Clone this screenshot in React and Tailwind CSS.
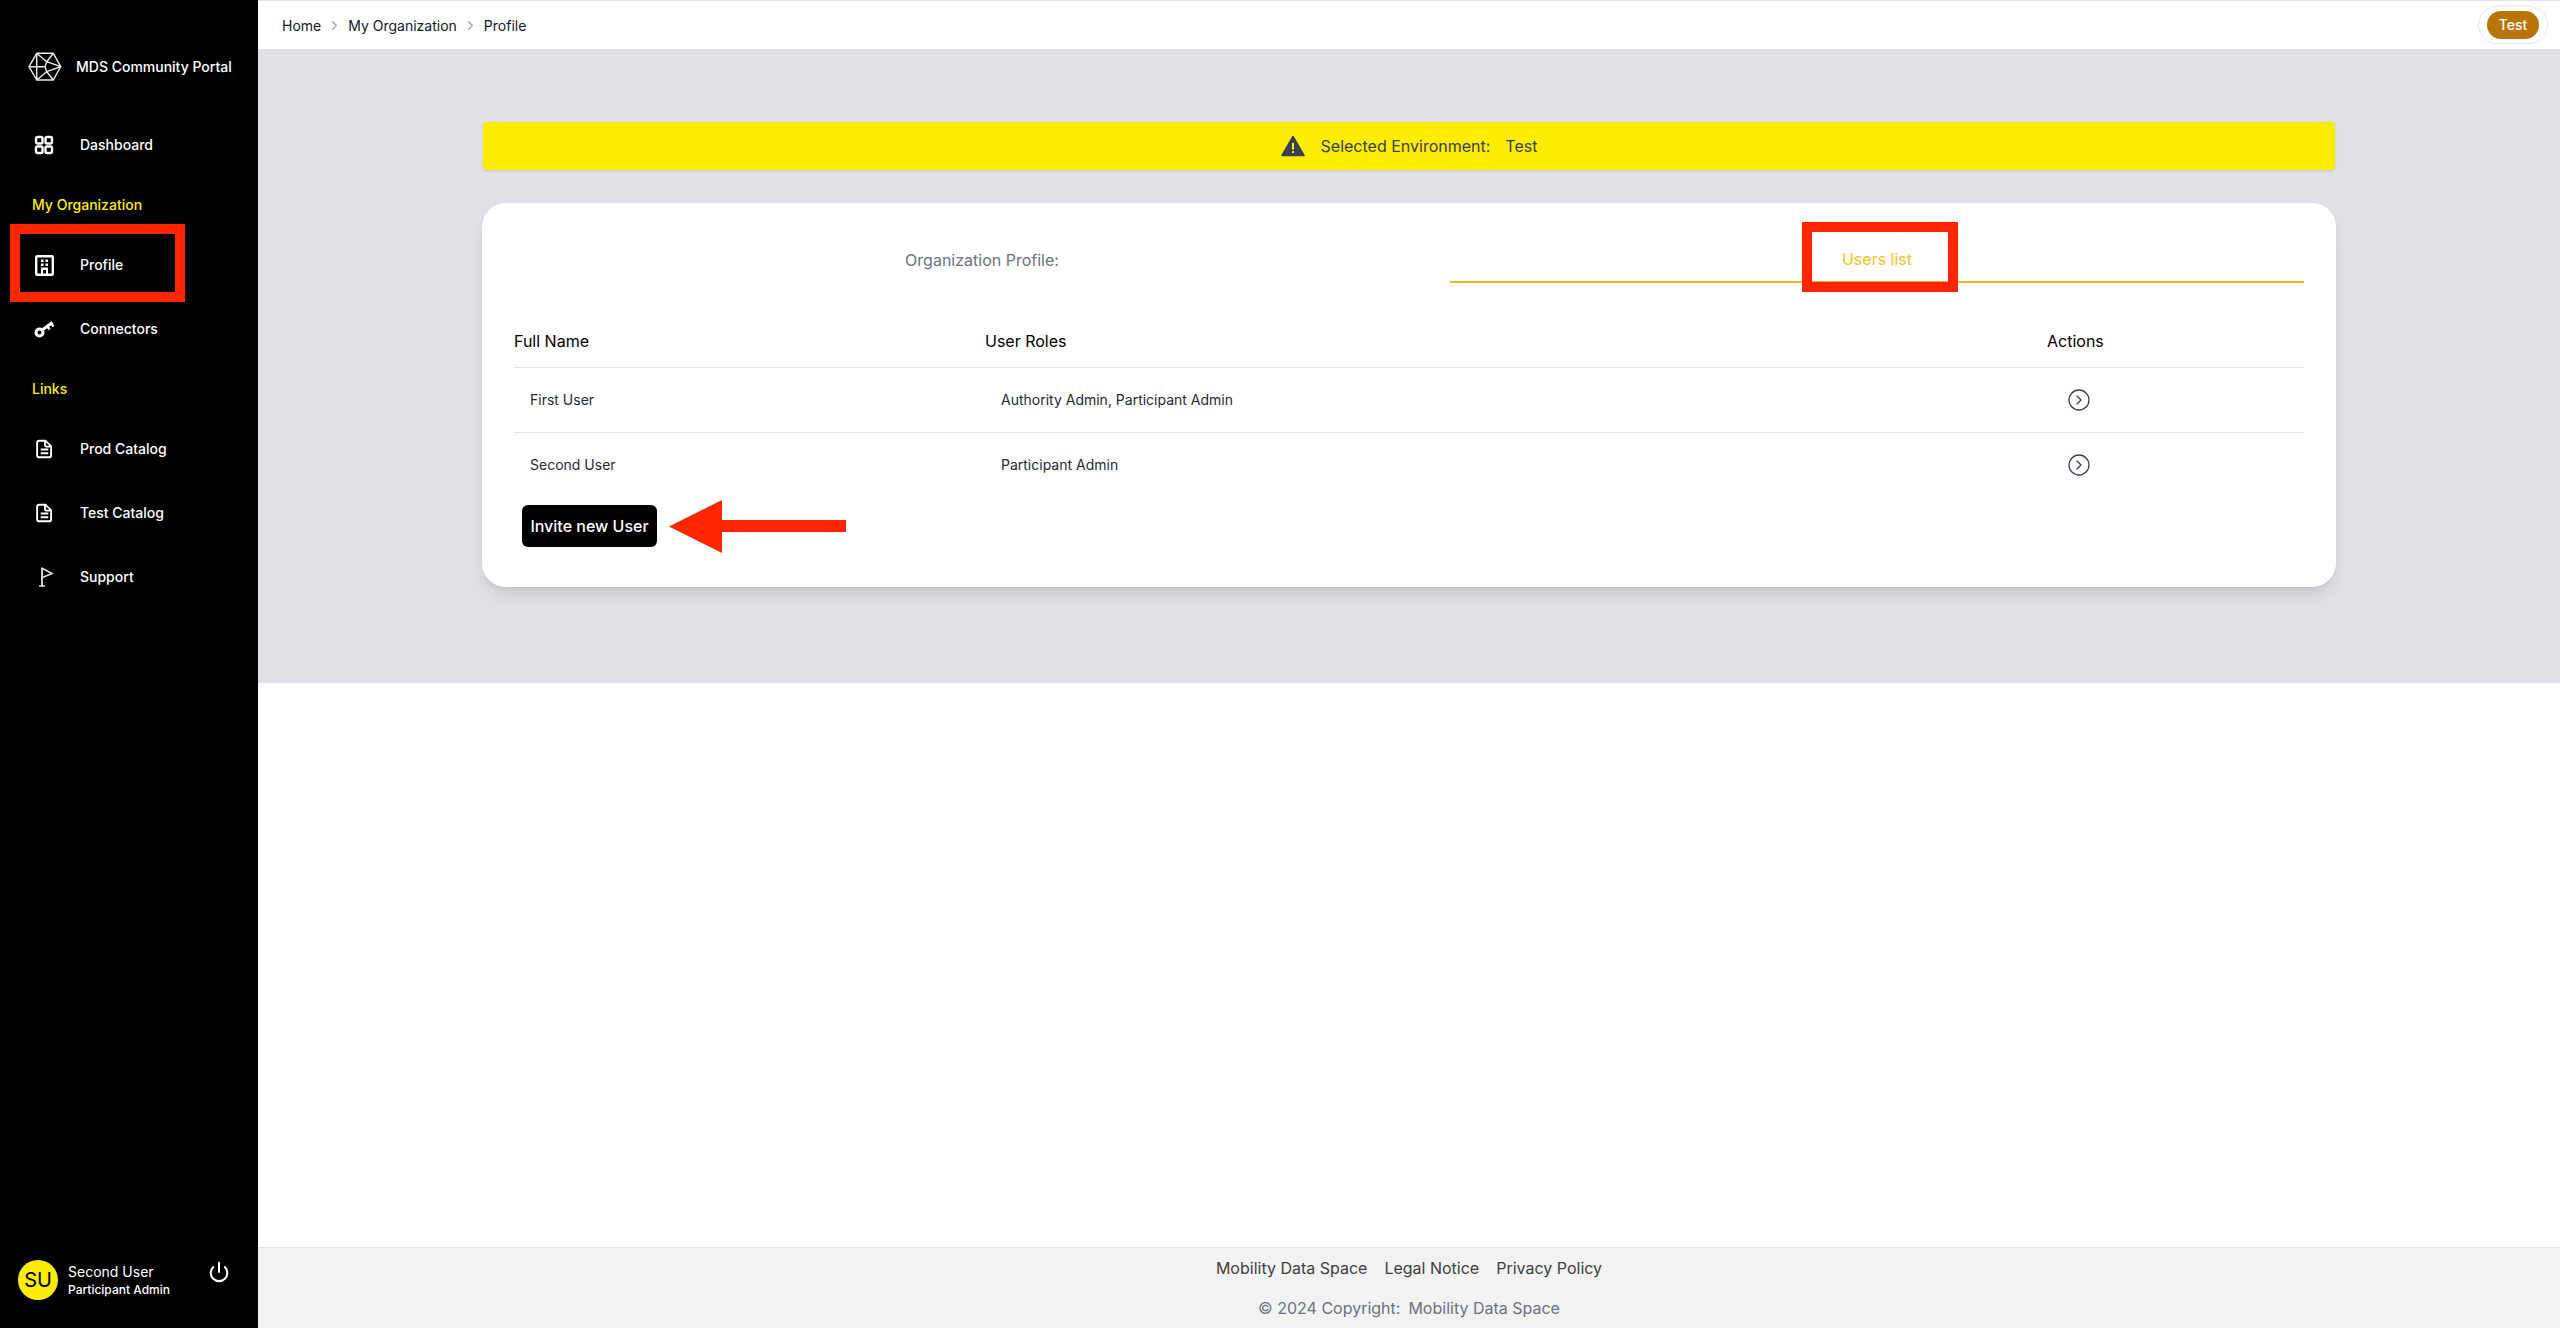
import { CircleChevronRight, ChevronRight, Power } from "lucide-react";

// sidebar icons
const DashboardIcon = () => (
  <svg width="20" height="20" viewBox="0 0 20 20" fill="none" stroke="white" strokeWidth="2.4">
    <rect x="2" y="2" width="6.5" height="6.5" rx="1.5" />
    <rect x="11.5" y="2" width="6.5" height="6.5" rx="1.5" />
    <rect x="2" y="11.5" width="6.5" height="6.5" rx="1.5" />
    <rect x="11.5" y="11.5" width="6.5" height="6.5" rx="1.5" />
  </svg>
);

const BuildingIcon = () => (
  <svg width="19" height="21" viewBox="0 0 19 21">
    <rect x="1.2" y="1.2" width="16.6" height="18.6" rx="1" fill="none" stroke="white" strokeWidth="2.4" />
    <path d="M6 4.5h2.5V7H6zM10.5 4.5H13V7h-2.5zM6 8.5h2.5V11H6zM10.5 8.5H13V11h-2.5zM6 12.5h7V19h-2v-4H8v4H6z" fill="white" />
  </svg>
);

const KeyIcon = () => (
  <svg width="20" height="20" viewBox="0 0 20 20" fill="none" stroke="white">
    <circle cx="5.5" cy="13.5" r="3.5" strokeWidth="3" />
    <path d="M8 11 18.5 3.5" strokeWidth="3" />
    <path d="M13.5 7.5 15.5 10.5M17 4.5 19.5 7.5" strokeWidth="2.4" />
  </svg>
);

const DocIcon = () => (
  <svg width="17" height="20" viewBox="0 0 18 20" fill="none" stroke="white" strokeWidth="2" strokeLinejoin="round">
    <path d="M3.5 1.2h6.5l6 6v9.3a2.3 2.3 0 0 1-2.3 2.3H3.5a2.3 2.3 0 0 1-2.3-2.3V3.5a2.3 2.3 0 0 1 2.3-2.3z" />
    <path d="M9.5 1.5v4a2 2 0 0 0 2 2h4M5 10.5h8M5 14.5h8" />
  </svg>
);

const FlagIcon = () => (
  <svg width="20" height="20" viewBox="0 0 20 20" fill="none" stroke="#e5e5e5">
    <path d="M8 0.5v18.5" strokeWidth="1.8" />
    <path d="M5 19h6" strokeWidth="1.5" />
    <path d="M8.5 1.5 18 6.5 8.5 10.5" strokeWidth="1.5" />
  </svg>
);

const Logo = () => (
  <svg width="34" height="31" viewBox="0 0 34 31" fill="none" stroke="#ececec" strokeWidth="1.4" strokeLinejoin="round">
    <path d="M1 14.7 8.7 1.3h16.6l7.4 13.4-7.4 13.3H8.7z" />
    <path d="M8.7 1.3V28M1 14.7h16M8.7 1.3l10 8.4 6.6-8.4M18.7 9.7l14 5-14 5 6.6 8.3M8.7 28l10-8.3M18.7 9.7 17 14.7l1.7 5" />
  </svg>
);

const NavItem = ({ icon, label }) => (
  <div className="flex h-16 items-center pl-[34px]">
    <span className="flex w-5 justify-center">{icon}</span>
    <span className="ml-[26px] text-sm font-medium text-white">{label}</span>
  </div>
);

const SectionLabel = ({ children }) => (
  <div className="flex h-[56px] items-center pl-8 text-sm font-medium text-[#ffed00]">{children}</div>
);

const Sidebar = () => (
  <aside className="relative flex w-[258px] shrink-0 flex-col bg-black">
    <div className="flex h-[113px] items-center pl-7 pt-[21px]">
      <Logo />
      <span className="ml-[14px] text-sm font-medium text-white">MDS Community Portal</span>
    </div>
    <NavItem icon={<DashboardIcon />} label="Dashboard" />
    <SectionLabel>My Organization</SectionLabel>
    <div className="relative">
      <NavItem icon={<BuildingIcon />} label="Profile" />
      <div className="absolute left-[10px] top-[-9px] h-[78px] w-[175px] border-[10px] border-[#ff2600]" />
    </div>
    <NavItem icon={<KeyIcon />} label="Connectors" />
    <SectionLabel>Links</SectionLabel>
    <NavItem icon={<DocIcon />} label="Prod Catalog" />
    <NavItem icon={<DocIcon />} label="Test Catalog" />
    <NavItem icon={<FlagIcon />} label="Support" />
    <div className="mt-auto flex h-[88px] items-start pl-[18px] pt-[20px] text-white">
      <div className="flex h-10 w-10 items-center justify-center rounded-full bg-[#ffed00] text-xl text-black">SU</div>
      <div className="ml-[10px] mt-[2px]">
        <div className="text-sm leading-[20px]">Second User</div>
        <div className="text-xs font-medium leading-[16px]">Participant Admin</div>
      </div>
      <Power className="ml-[38px] mt-[1px]" size={22} strokeWidth={2.2} />
    </div>
  </aside>
);

const Breadcrumbs = () => (
  <div className="flex items-center pt-px text-sm text-[#111827]">
    <span>Home</span>
    <ChevronRight className="mx-[6px] text-gray-400" size={15} />
    <span>My Organization</span>
    <ChevronRight className="mx-[6px] text-gray-400" size={15} />
    <span>Profile</span>
  </div>
);

const users = [
  { name: "First User", roles: "Authority Admin, Participant Admin" },
  { name: "Second User", roles: "Participant Admin" },
];

const UsersTable = () => (
  <div>
    <div className="grid grid-cols-[471px_1062px_1fr] border-b border-[#e5e7eb] pb-[14px] pt-[46px] text-base leading-6 text-black">
      <span>Full Name</span>
      <span>User Roles</span>
      <span>Actions</span>
    </div>
    {users.map((u, i) => (
      <div
        key={u.name}
        className={`grid grid-cols-[471px_1062px_1fr] items-center text-sm text-[#1f2937] ${
          i === 0 ? "h-[65px] border-b border-[#e5e7eb]" : "h-[64px]"
        }`}
      >
        <span className="pl-4">{u.name}</span>
        <span className="pl-4">{u.roles}</span>
        <CircleChevronRight className="ml-[20px] text-[#374151]" size={24} strokeWidth={1.3} />
      </div>
    ))}
  </div>
);

export default function App() {
  return (
    <div className="flex h-screen w-full overflow-hidden bg-white font-['Inter',sans-serif]">
      <Sidebar />
      <main className="flex min-w-0 flex-1 flex-col">
        <header className="flex h-[49px] items-center justify-between border-t border-[#e0e1e6] pl-6 pr-3">
          <Breadcrumbs />
          <div className="rounded-full border border-[#e5e7eb] px-2 py-1">
            <span className="block w-[52px] rounded-full bg-[#b87503] text-center text-sm font-medium leading-[28px] text-white">Test</span>
          </div>
        </header>

        <section className="bg-[#e0e1e6] px-[224px] pb-[96px] pt-[73px]">
          <div className="mx-px flex h-12 items-center justify-center rounded bg-[#ffed00] text-base text-[#374151] shadow-sm">
            <svg className="mr-[16px]" width="24" height="22" viewBox="0 0 24 22">
              <path d="M12 1.5 23 20.5H1z" fill="#374151" stroke="#374151" strokeWidth="1.5" strokeLinejoin="round" />
              <path d="M11 8h2v6.5h-2zM11 16h2v2h-2z" fill="#ffed00" />
            </svg>
            <span>Selected Environment:</span>
            <span className="ml-[15px]">Test</span>
          </div>

          <div className="mt-[33px] h-[384px] rounded-3xl bg-white px-8 pt-8 shadow-lg">
            <div className="flex h-12 text-base">
              <div className="flex w-[936px] items-center justify-center pt-[1px] text-[#6b7280]">Organization Profile:</div>
              <div className="relative flex flex-1 items-center justify-center border-b-2 border-[#f0b429] pt-[2px] text-[#fbbf24]">
                Users list
                <div className="absolute left-[352px] top-[-13px] h-[70px] w-[156px] border-[10px] border-[#ff2600]" />
              </div>
            </div>
            <UsersTable />
            <div className="relative ml-2 mt-[8px]">
              <button className="h-[42px] w-[135px] rounded-md bg-black text-base font-medium text-white">Invite new User</button>
              <svg className="absolute left-[147px] top-[-5px]" width="178" height="53" viewBox="0 0 178 53">
                <path d="M0 26.5 53 0v20h124v12H53v21z" fill="#ff2600" />
              </svg>
            </div>
          </div>
        </section>

        <div className="flex-1" />

        <footer className="h-[81px] border-t border-[#e5e5e5] bg-[#f2f2f2] text-center text-base">
          <div className="flex justify-center gap-[17px] pt-[8px] leading-6 text-[#404040]">
            <span>Mobility Data Space</span>
            <span>Legal Notice</span>
            <span>Privacy Policy</span>
          </div>
          <div className="mt-[16px] flex justify-center gap-[8px] leading-6 text-[#6b7280]">
            <span>© 2024 Copyright:</span>
            <span>Mobility Data Space</span>
          </div>
        </footer>
      </main>
    </div>
  );
}
